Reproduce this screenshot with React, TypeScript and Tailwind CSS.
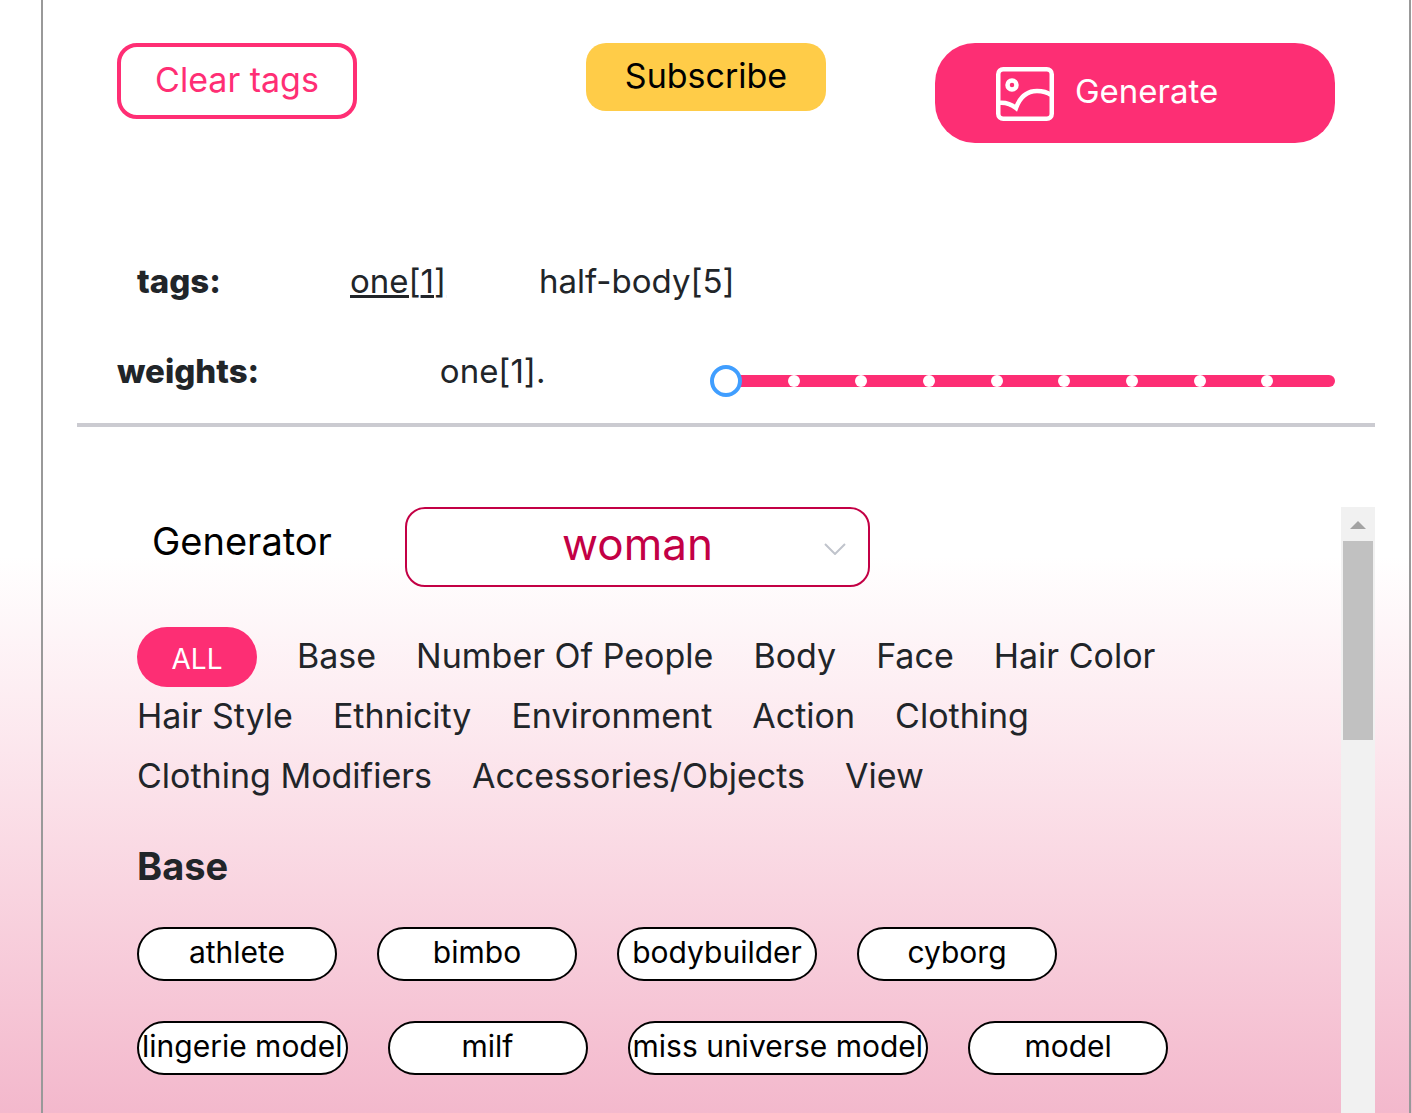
import { useState } from "react";

const categories = [
  "Base",
  "Number Of People",
  "Body",
  "Face",
  "Hair Color",
  "Hair Style",
  "Ethnicity",
  "Environment",
  "Action",
  "Clothing",
  "Clothing Modifiers",
  "Accessories/Objects",
  "View",
];

const baseTags = [
  "athlete",
  "bimbo",
  "bodybuilder",
  "cyborg",
  "lingerie model",
  "milf",
  "miss universe model",
  "model",
];

const stops = [1, 2, 3, 4, 5, 6, 7, 8];

function ImageIcon() {
  return (
    <svg className="h-[54px] w-[60px]" viewBox="0 0 60 54" fill="none" stroke="currentColor" strokeWidth="4.5" aria-hidden="true">
      <rect x="3.25" y="2.25" width="53.5" height="49.5" rx="5" />
      <circle cx="17" cy="18" r="4.5" />
      <path d="M3 36c8-1 13 1 18 5c4-11 11-17 21-17c6 0 10 1 14 4" />
    </svg>
  );
}

function TopButtons() {
  return (
    <div className="flex items-start px-10">
      <button type="button" className="h-[76px] w-60 rounded-[20px] border-4 border-[#ff2e74] pb-1 text-[34px] text-[#ff2e74]">
        Clear tags
      </button>
      <button type="button" className="mr-[109px] ml-auto h-[68px] w-60 rounded-[20px] bg-[#ffcc48] pb-1 text-[34px] text-black">
        Subscribe
      </button>
      <button type="button" className="flex h-[100px] w-[400px] items-center gap-5 rounded-[40px] bg-[#fd2e74] pt-0.5 pl-[60px] text-[33px] text-white">
        <ImageIcon />
        <span className="pb-1">Generate</span>
      </button>
    </div>
  );
}

function WeightSlider({ value, onChange }: { value: number; onChange: (v: number) => void }) {
  return (
    <div className="relative mt-[18px] h-3 w-1/2 rounded-full bg-[#fd2e74]">
      {stops.map((stop) => (
        <span
          key={stop}
          className="absolute top-0 size-3 -translate-x-1/2 rounded-full bg-white"
          style={{ left: `${(stop / 9) * 100}%` }}
        />
      ))}
      <input
        type="range"
        aria-label="Weight"
        min={1}
        max={10}
        value={value}
        onChange={(e) => onChange(Number(e.target.value))}
        className="absolute -inset-x-4 -top-[10px] h-8 cursor-pointer appearance-none bg-transparent [&::-webkit-slider-thumb]:size-8 [&::-webkit-slider-thumb]:appearance-none [&::-webkit-slider-thumb]:rounded-full [&::-webkit-slider-thumb]:border-4 [&::-webkit-slider-thumb]:border-solid [&::-webkit-slider-thumb]:border-[#409eff] [&::-webkit-slider-thumb]:bg-white"
      />
    </div>
  );
}

function App() {
  const [weight, setWeight] = useState(1);
  return (
    <div className="h-screen overflow-hidden bg-white bg-linear-to-b from-white from-50% to-[#f3b8cc] font-['Inter',sans-serif] text-[#212529]">
      <main className="mr-px ml-[41px] flex h-full flex-col border-x-2 border-[#999999] px-[34px] pt-[43px]">
        <TopButtons />

        {/* selected tags */}
        <div className="mt-[114px] flex h-[50px] items-center px-[60px] text-[33px]">
          <strong className="w-[213px] font-extrabold">tags:</strong>
          <button type="button" className="mr-[93px] underline">one[{weight}]</button>
          <button type="button">half-body[5]</button>
        </div>

        <div className="mt-10 flex h-[50px] items-center px-10 text-[33px]">
          <strong className="font-extrabold">weights:</strong>
          <span className="flex-1 text-center">one[{weight}].</span>
          <WeightSlider value={weight} onChange={setWeight} />
        </div>
        <hr className="mt-[26px] border-t-4 border-[#cbcbd1]" />

        <div className="mt-20 flex min-h-0 flex-1">
          <div className="flex-1">
            <div className="flex items-start pl-[75px]">
              <label htmlFor="generator" className="w-[253px] pt-1.5 text-[38px] text-black">Generator</label>
              <div className="relative">
                <select
                  id="generator"
                  className="h-20 w-[465px] appearance-none rounded-[20px] border-2 border-[#c30045] bg-white pb-1.5 text-center [text-align-last:center] text-[44px] text-[#c30045]"
                >
                  <option>woman</option>
                  <option>man</option>
                </select>
                <svg className="pointer-events-none absolute top-9 right-6 h-3 w-[22px]" viewBox="0 0 22 12" fill="none" stroke="#c0c4cc" strokeWidth="2" aria-hidden="true">
                  <path d="M1 1l10 10L21 1" />
                </svg>
              </div>
            </div>

            {/* categories */}
            <nav className="mt-10 flex flex-wrap gap-x-10 pr-20 pl-[60px] text-[34px]">
              <button type="button" className="h-[60px] w-[120px] rounded-full bg-[#fd2e74] pt-1 text-[28px] text-white">ALL</button>
              {categories.map((name) => (
                <button key={name} type="button" className="h-[60px] pb-1">{name}</button>
              ))}
            </nav>

            <section className="mt-8 pl-[60px]">
              <h2 className="text-[38px] leading-[54px] font-bold">Base</h2>
              <div className="mt-[34px] flex flex-wrap gap-10 pr-20">
                {baseTags.map((tag) => (
                  <button key={tag} type="button" className="h-[54px] min-w-[200px] rounded-full border-2 border-black bg-white px-[3px] pb-1 text-[30px] text-black">
                    {tag}
                  </button>
                ))}
              </div>
            </section>
          </div>

          {/* scroll bar */}
          <div className="w-[34px] bg-[#f1f1f1] px-0.5">
            <div className="flex h-[34px] items-center justify-center pt-0.5">
              <svg className="h-2 w-4" viewBox="0 0 16 8" fill="#a3a3a3" aria-hidden="true">
                <path d="M0 8L8 0l8 8z" />
              </svg>
            </div>
            <div className="h-[199px] bg-[#c1c1c1]" />
          </div>
        </div>
      </main>
    </div>
  );
}

export default App;
